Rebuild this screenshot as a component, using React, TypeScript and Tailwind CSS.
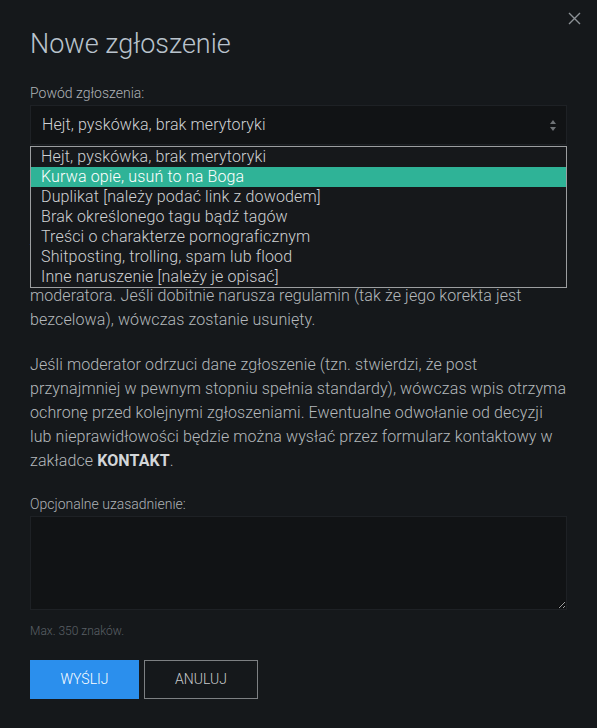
import React, { useState } from "react";

const reasons = [
  "Hejt, pyskówka, brak merytoryki",
  "Kurwa opie, usuń to na Boga",
  "Duplikat [należy podać link z dowodem]",
  "Brak określonego tagu bądź tagów",
  "Treści o charakterze pornograficznym",
  "Shitposting, trolling, spam lub flood",
  "Inne naruszenie [należy je opisać]",
];

const App: React.FC = () => {
  const [reason] = useState(reasons[0]); // Selected reason
  const [hovered, setHovered] = useState(1); // Highlighted option in the open list
  const [note, setNote] = useState(""); // Optional justification

  return (
    <div
      className="relative w-[597px] h-[728px] bg-[#15181b] text-[#b4b8bc] overflow-hidden"
      style={{ fontFamily: "Roboto, 'Liberation Sans', sans-serif" }}
    >
      <button className="absolute top-[12px] right-[16px] w-[13px] h-[13px] text-[#8c9196]">
        <svg viewBox="0 0 13 13" width="13" height="13" fill="none" stroke="currentColor" strokeWidth="1.4">
          <path d="M1 1 L12 12 M12 1 L1 12" />
        </svg>
      </button>

      <div className="px-[30px] pt-[29px]">
        <h1 className="text-[27px] leading-[30px] font-light text-[#b9c3cd]">Nowe zgłoszenie</h1>

        <label className="block mt-[24px] mb-[2px] text-[14px] leading-[20px] font-light text-[#aeb2b6]">
          Powód zgłoszenia:
        </label>

        <div className="relative">
          <div className="flex items-center justify-between h-[40px] pl-[11px] pr-[10px] bg-[#111315] border border-[#1e2125] text-[16px] font-light tracking-[0.1px] text-[#d0d2d4]">
            <span>{reason}</span>
            <svg width="6" height="11" viewBox="0 0 6 11" className="text-[#6f7377]">
              <path d="M3 0 L6 4 L0 4 Z M0 7 L6 7 L3 11 Z" fill="currentColor" />
            </svg>
          </div>

          {/* open option list */}
          <ul className="absolute z-10 top-[41px] left-0 right-0 bg-[#16181b] border border-[#9c9ea0]">
            {reasons.map((r, i) => (
              <li
                key={r}
                onMouseEnter={() => setHovered(i)}
                className={
                  i === hovered
                    ? "h-[20px] leading-[20px] pl-[10px] text-[16px] font-light tracking-[0.15px] bg-[#2fb397] text-white"
                    : "h-[20px] leading-[20px] pl-[10px] text-[16px] font-light tracking-[0.15px] text-[#cfd1d3]"
                }
              >
                {r}
              </li>
            ))}
          </ul>
        </div>

        <p className="mt-[19px] text-[16px] leading-[24px] font-light tracking-[0.1px]">
          Zgłoszony wpis trafi do kolejki moderacji, gdzie zostanie sprawdzony pod kątem zgodności z
          regulaminem serwisu. Jeśli narusza on zasady w niewielkim stopniu, autor zostanie poproszony o
          jego poprawienie, a do tego czasu wpis pozostanie ukryty dla innych użytkowników. Decyzja o
          dalszym losie wpisu należy każdorazowo do
          <br />
          moderatora. Jeśli dobitnie narusza regulamin (tak że jego korekta jest bezcelowa), wówczas
          zostanie usunięty.
        </p>

        <p className="mt-[21px] text-[16px] leading-[24px] font-light tracking-[0.1px]">
          Jeśli moderator odrzuci dane zgłoszenie (tzn. stwierdzi, że post przynajmniej w pewnym stopniu
          spełnia standardy), wówczas wpis otrzyma ochronę przed kolejnymi zgłoszeniami. Ewentualne
          odwołanie od decyzji lub nieprawidłowości będzie można wysłać przez formularz kontaktowy w
          zakładce <b className="font-bold text-[#d3d6d9]">KONTAKT</b>.
        </p>

        <label className="block mt-[21px] mb-[2px] text-[14px] leading-[20px] font-light text-[#aeb2b6]">
          Opcjonalne uzasadnienie:
        </label>
        <textarea
          value={note}
          maxLength={350}
          onChange={(e) => setNote(e.target.value)}
          className="block w-full h-[94px] bg-[#111315] border border-[#1e2125] text-[#d0d2d4] outline-none"
        />
        <p className="mt-[13px] text-[12px] leading-[16px] font-light text-[#5b6066]">Max. 350 znaków.</p>

        <div className="flex gap-[5px] mt-[21px]">
          <button className="w-[109px] h-[39px] bg-[#2b8fed] text-white text-[14px] font-light uppercase">
            Wyślij
          </button>
          <button className="w-[114px] h-[39px] border border-[#7d8083] text-[#c8cacc] text-[14px] font-light uppercase">
            Anuluj
          </button>
        </div>
      </div>
    </div>
  );
};

export default App;
